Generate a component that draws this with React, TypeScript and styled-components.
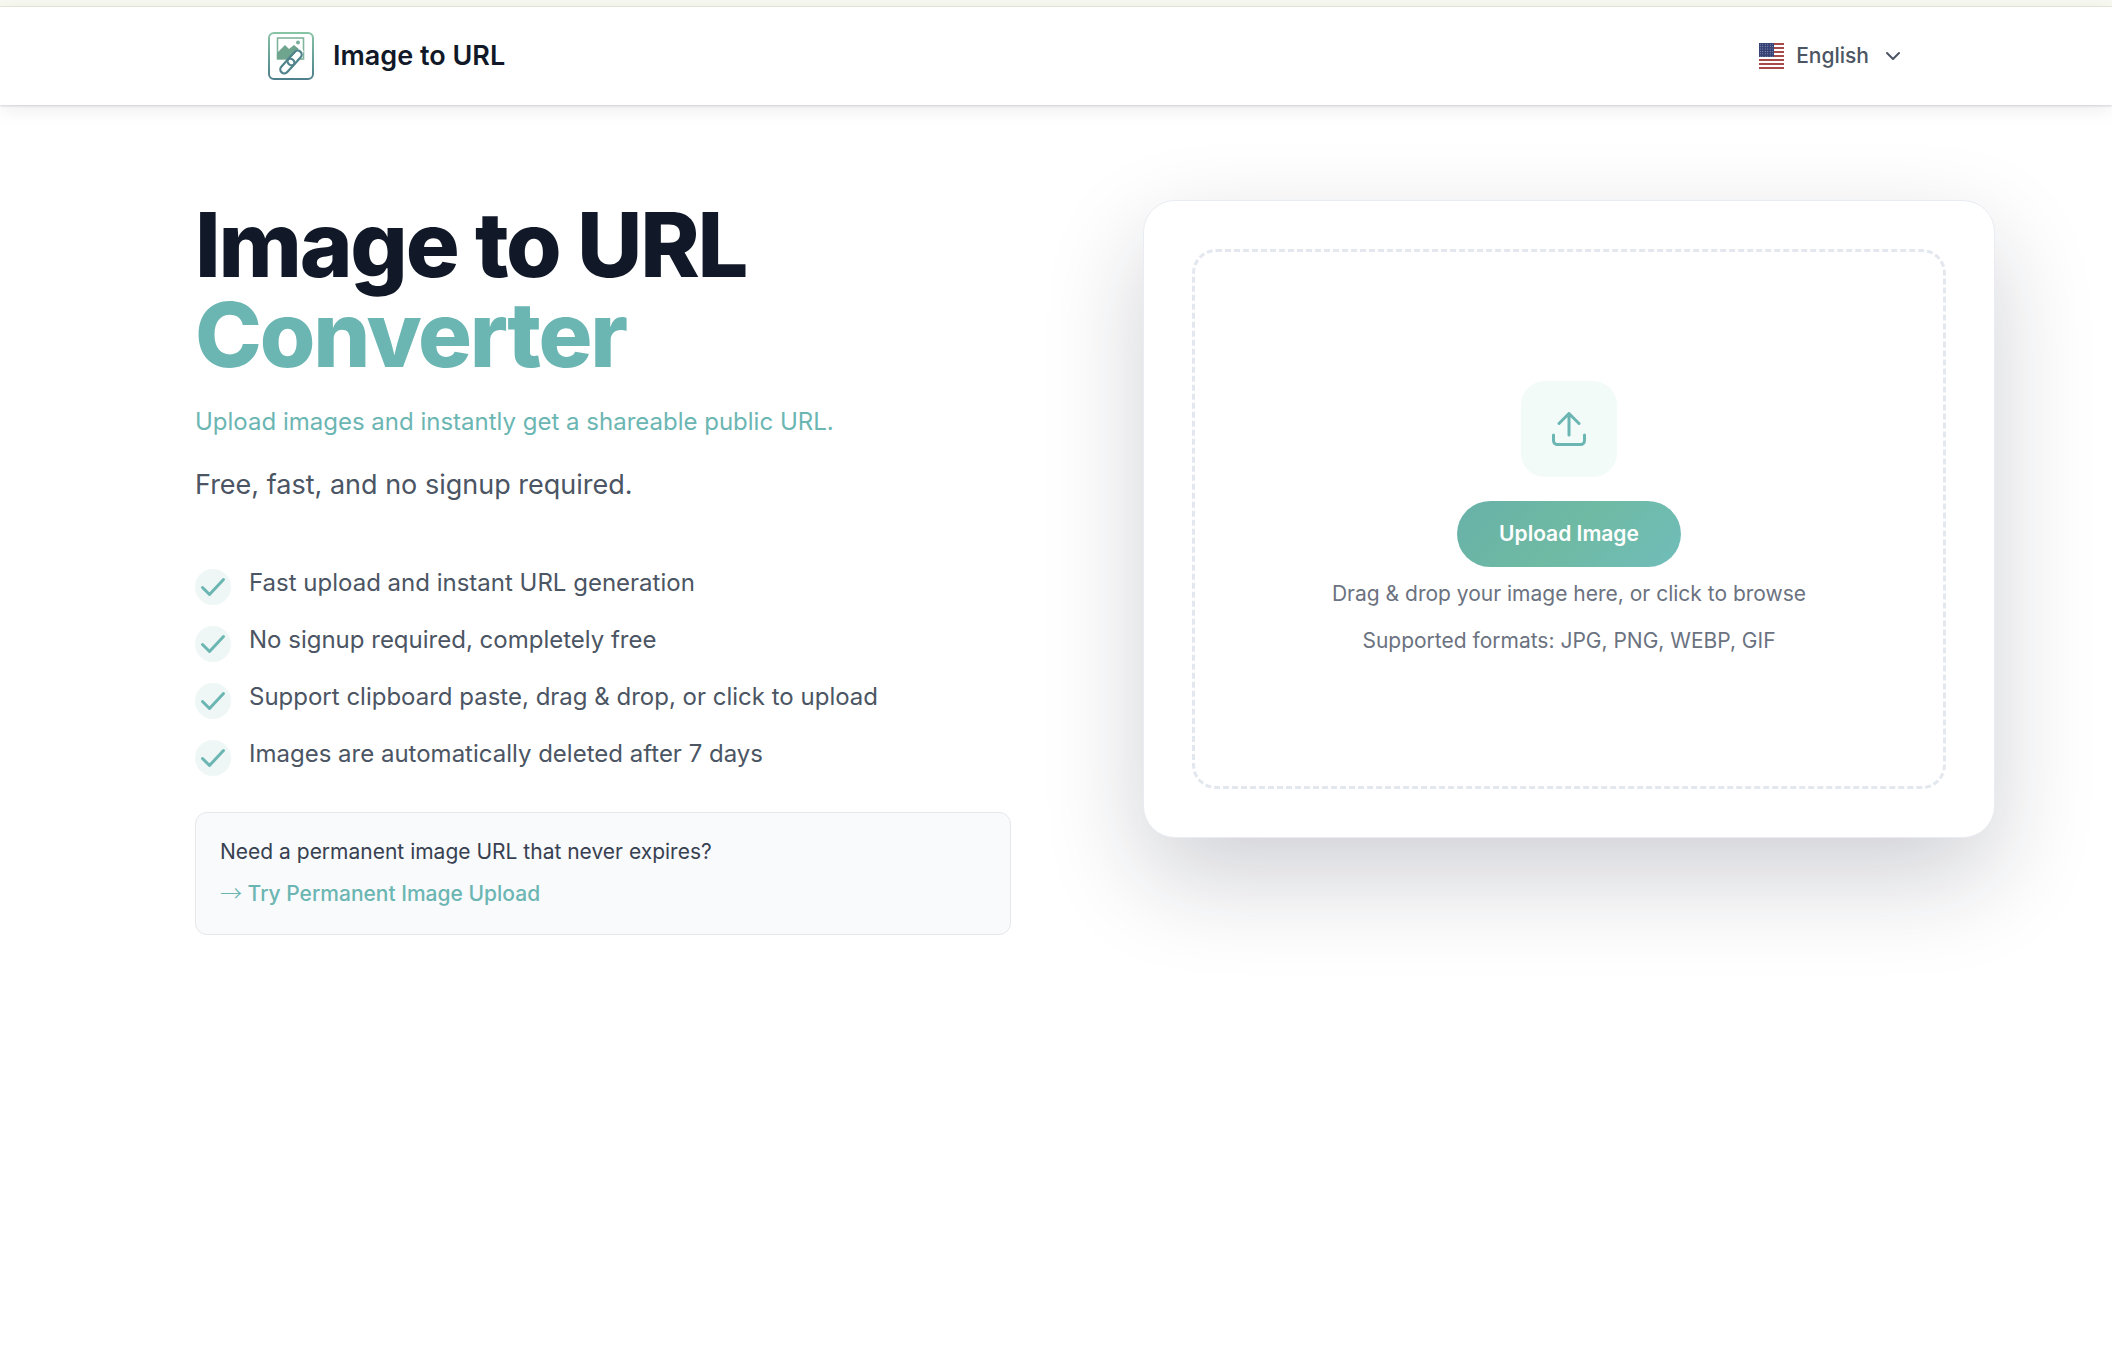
import React from "react";
import styled, { createGlobalStyle } from "styled-components";

const Global = createGlobalStyle`
  html, body { margin: 0; padding: 0; background: #ffffff; }
  body { font-family: Inter, "Liberation Sans", sans-serif; }
`;

const Page = styled.div`
  width: 2112px;
  height: 1346px;
  overflow: hidden;
  display: flex;
  flex-direction: column;
  background: #fff;
`;
const TopStrip = styled.div`
  height: 6px;
  background: #f8f9f1;
  border-bottom: 1px solid #e9ebdc;
`;
const Header = styled.header`
  height: 98px;
  flex: none;
  display: flex;
  align-items: center;
  justify-content: space-between;
  padding: 0 211px 0 268px;
  background: #fff;
  box-shadow: 0 1px 2px rgba(60, 60, 110, 0.2), 0 4px 20px rgba(0, 0, 0, 0.08);
  position: relative;
  z-index: 1;
`;
const Brand = styled.div`
  display: flex;
  align-items: center;
  gap: 17px;
`;
const BrandName = styled.span`
  font-size: 27px;
  font-weight: 600;
  color: #111827;
  padding-bottom: 2px;
`;
const Lang = styled.div`
  display: flex;
  align-items: center;
  color: #4b5563;
  font-size: 21px;
  font-weight: 500;
`;
const LangLabel = styled.span`
  margin: 0 16px 0 12px;
  padding-bottom: 1px;
`;
const Main = styled.main`
  display: flex;
  align-items: flex-start;
  padding: 95px 0 0 195px;
  gap: 132px;
`;
const Left = styled.section`
  width: 816px;
  flex: none;
`;
const Title = styled.h1`
  margin: 0;
  font-size: 90px;
  line-height: 90px;
  font-weight: 800;
  letter-spacing: -2.25px;
  color: #111827;
`;
const TitleAccent = styled.span`
  display: block;
  color: #6bb6b3;
`;
const Lead = styled.p`
  margin: 24px 0 0;
  font-size: 24px;
  line-height: 36px;
  color: #6bb6b3;
`;
const Sub = styled.p`
  margin: 27px 0 0;
  font-size: 27px;
  line-height: 36px;
  color: #4b5563;
`;
const Features = styled.ul`
  list-style: none;
  margin: 62px 0 0;
  padding: 0;
  display: flex;
  flex-direction: column;
  gap: 17px;
`;
const Feature = styled.li`
  display: flex;
  align-items: flex-start;
  gap: 18px;
  font-size: 24px;
  line-height: 36px;
  color: #4b5563;
`;
const CheckDot = styled.span`
  width: 36px;
  height: 36px;
  margin-top: 4px;
  border-radius: 50%;
  background: #eef7f5;
  flex: none;
  display: flex;
  align-items: center;
  justify-content: center;
`;
const Note = styled.div`
  margin-top: 36px;
  box-sizing: border-box;
  height: 123px;
  padding: 18px 24px;
  background: #f9fafb;
  border: 1px solid #e5e7eb;
  border-radius: 12px;
  font-size: 21px;
  line-height: 42px;
  color: #374151;
`;
const NoteLink = styled.a`
  display: block;
  color: #6bb6b3;
  text-decoration: none;
  font-weight: 500;
`;
const NoteArrow = styled.span`
  font-family: "Noto Sans CJK SC", sans-serif;
  font-size: 22px;
  font-weight: 300;
  line-height: 1;
`;
const Card = styled.section`
  width: 852px;
  height: 638px;
  flex: none;
  box-sizing: border-box;
  padding: 48px;
  background: #fff;
  border: 1px solid #e9edf3;
  border-radius: 32px;
  box-shadow: 0 40px 100px rgba(20, 25, 50, 0.2);
`;
const Drop = styled.div`
  height: 100%;
  box-sizing: border-box;
  border: 3px dashed #e3e7ee;
  border-radius: 24px;
  display: flex;
  flex-direction: column;
  align-items: center;
  padding-top: 129px;
`;
const IconTile = styled.div`
  width: 96px;
  height: 96px;
  border-radius: 24px;
  background: #f3fbf8;
  display: flex;
  align-items: center;
  justify-content: center;
`;
const UploadButton = styled.button`
  width: 224px;
  height: 66px;
  margin-top: 24px;
  padding: 0 0 2px;
  border: 0;
  border-radius: 33px;
  background: linear-gradient(135deg, #68b1a9 0%, #6fbaa3 50%, #70bdbb 100%);
  color: #fff;
  font: 600 21px Inter, sans-serif;
`;
const Hint = styled.p<{ $top: number }>`
  margin: ${(p) => p.$top}px 0 0;
  font-size: 21px;
  line-height: 30px;
  color: #6b7280;
`;

const Logo = () => (
  <svg width="48" height="48" viewBox="0 0 48 48" fill="none">
    <defs>
      <linearGradient id="lg" x1="0" y1="0" x2="0" y2="1">
        <stop offset="0" stopColor="#86c4a4" />
        <stop offset="1" stopColor="#4d7f8c" />
      </linearGradient>
    </defs>
    <rect x="1" y="1" width="44" height="46" rx="5" stroke="url(#lg)" strokeWidth="2" />
    <rect x="9.5" y="6" width="26" height="21" stroke="#80b49d" strokeWidth="1.6" />
    <path d="M9 27v-6l8-8 4 4 5-4 6 5-6 9z" fill="#6fa48f" />
    <circle cx="30" cy="10.5" r="2" fill="#7bb09b" />
    <g stroke="#fff" strokeWidth="6" strokeLinecap="round" transform="rotate(-48 23 30)">
      <path d="M9 30h28" />
    </g>
    <g stroke="#51838c" strokeWidth="2.2" fill="none" transform="rotate(-48 23 30)">
      <rect x="9" y="26" width="17" height="8" rx="4" />
      <rect x="20" y="26" width="17" height="8" rx="4" />
    </g>
  </svg>
);

const Flag = () => (
  <svg width="25" height="26" viewBox="0 0 25 26">
    <defs>
      <pattern id="stars" width="2.5" height="2.4" patternUnits="userSpaceOnUse">
        <circle cx="1.25" cy="1.2" r="0.5" fill="#b8bdd6" />
      </pattern>
    </defs>
    <rect width="25" height="26" fill="#fff" />
    {[0, 4, 8, 12, 16, 20, 24].map((y) => (
      <rect key={y} y={y} width="25" height="2" fill="#a84a4a" />
    ))}
    <rect width="15" height="14" fill="#333f73" />
    <rect width="15" height="14" fill="url(#stars)" />
  </svg>
);

const Chevron = () => (
  <svg width="16" height="10" viewBox="0 0 16 10" fill="none">
    <path d="M2 2l6 6 6-6" stroke="#4b5563" strokeWidth="2" strokeLinecap="round" strokeLinejoin="round" />
  </svg>
);

const Check = () => (
  <svg width="26" height="20" viewBox="0 0 26 20" fill="none">
    <path d="M2.5 10.5l7 7L23.5 2.5" stroke="#6bb6b3" strokeWidth="3" strokeLinecap="round" strokeLinejoin="round" />
  </svg>
);

const UploadIcon = () => (
  <svg width="34" height="34" viewBox="0 0 34 34" fill="none">
    <path
      d="M17 23V2M7 11.5l10-10 10 10M1.5 23v5.5a4 4 0 0 0 4 4h23a4 4 0 0 0 4-4V23"
      stroke="#6bb6b3"
      strokeWidth="3"
      strokeLinecap="round"
      strokeLinejoin="round"
    />
  </svg>
);

const features = [
  "Fast upload and instant URL generation",
  "No signup required, completely free",
  "Support clipboard paste, drag & drop, or click to upload",
  "Images are automatically deleted after 7 days",
];

export default function App() {
  return (
    <Page>
      <Global />
      <TopStrip />
      <Header>
        <Brand>
          <Logo />
          <BrandName>Image to URL</BrandName>
        </Brand>
        <Lang>
          <Flag />
          <LangLabel>English</LangLabel>
          <Chevron />
        </Lang>
      </Header>
      <Main>
        <Left>
          <Title>
            Image to URL
            <TitleAccent>Converter</TitleAccent>
          </Title>
          <Lead>Upload images and instantly get a shareable public URL.</Lead>
          <Sub>Free, fast, and no signup required.</Sub>
          <Features>
            {features.map((f) => (
              <Feature key={f}>
                <CheckDot>
                  <Check />
                </CheckDot>
                {f}
              </Feature>
            ))}
          </Features>
          <Note>
            Need a permanent image URL that never expires?
            <NoteLink href="#"><NoteArrow>→</NoteArrow> Try Permanent Image Upload</NoteLink>
          </Note>
        </Left>
        <Card>
          <Drop>
            <IconTile>
              <UploadIcon />
            </IconTile>
            <UploadButton>Upload Image</UploadButton>
            <Hint $top={12}>Drag &amp; drop your image here, or click to browse</Hint>
            <Hint $top={17}>Supported formats: JPG, PNG, WEBP, GIF</Hint>
          </Drop>
        </Card>
      </Main>
    </Page>
  );
}
